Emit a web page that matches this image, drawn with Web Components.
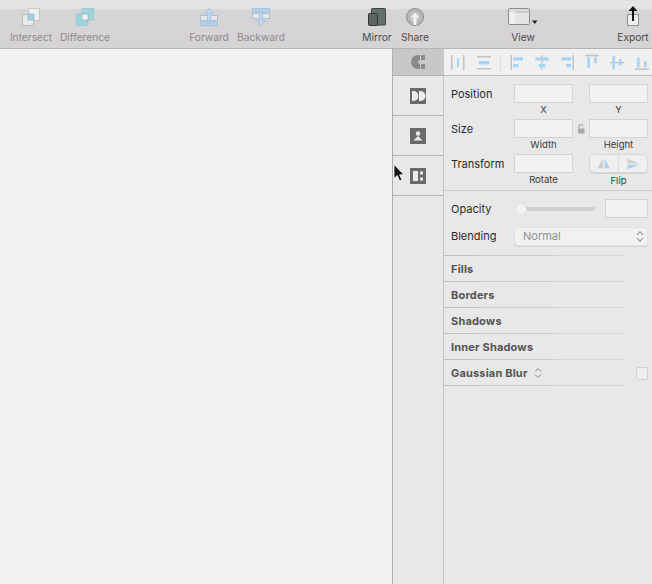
<!DOCTYPE html>
<html><head><meta charset="utf-8">
<style>
html,body{margin:0;padding:0;background:#f2f2f2;}
body{width:652px;height:584px;overflow:hidden;font-family:"Inter","Liberation Sans",sans-serif;}
app-shell{display:block;}
</style></head>
<body>
<app-shell>
  <tool-bar>
    <tool-item label="Intersect" w="52" ml="5" dim><svg width="18" height="18" viewBox="0 0 18 18"><rect x="6.500" y=".5" width="11" height="12" fill="#efefef" stroke="#c4c4c4"/><rect x=".5" y="6.500" width="11" height="11" fill="#e9e9e9" stroke="#bdbdbd"/><rect x="6" y="6" width="6" height="6" fill="#9ed4dc" stroke="#8ab" stroke-width=".6"/></svg></tool-item>
    <tool-item label="Difference" w="52" ml="2" dim><svg width="18" height="18" viewBox="0 0 18 18"><rect x="6" y="0" width="12" height="12" fill="#9ed4dc" stroke="#8cc0c9" stroke-width=".6"/><rect x="0" y="6" width="12" height="12" fill="#9ed4dc" stroke="#8cc0c9" stroke-width=".6"/><rect x="6" y="6" width="6" height="6" fill="#eee" stroke="#8aa" stroke-width=".5"/></svg></tool-item>
    <tool-item label="Forward" w="52" ml="72" dim><svg width="18" height="18" viewBox="0 0 18 18"><rect x=".5" y="14" width="17" height="3.500" fill="#b4d2ec" stroke="#98bddc" stroke-width=".7"/><rect x=".5" y="7.500" width="17" height="5" fill="#e6e6e6" stroke="#a3bdd4" stroke-width=".9"/><path d="M9 .5l4.500 5h-3V14h-3V5.500h-3z" fill="#bcd7ee" stroke="#98bddc" stroke-width=".7"/></svg></tool-item>
    <tool-item label="Backward" w="52" dim><svg width="18" height="18" viewBox="0 0 18 18"><rect x=".5" y=".5" width="17" height="3.500" fill="#b4d2ec" stroke="#98bddc" stroke-width=".7"/><rect x=".5" y="5.500" width="17" height="5" fill="#e6e6e6" stroke="#a3bdd4" stroke-width=".9"/><path d="M7.500 4h3v8.500h3L9 17.500 4.500 12.500h3z" fill="#bcd7ee" stroke="#98bddc" stroke-width=".7"/></svg></tool-item>
    <tool-item label="Mirror" w="38" ml="71"><svg width="18" height="18" viewBox="0 0 18 18"><rect x="3" y="0" width="15" height="17.500" rx="1.500" fill="#3f4442"/><rect x="4" y="1" width="13" height="15.500" fill="#66706b"/><rect x=".5" y="5.500" width="9" height="12" rx="1" fill="#5d6662" stroke="#333" stroke-width="1"/></svg></tool-item>
    <tool-item label="Share" w="38"><svg width="18" height="18" viewBox="0 0 18 18"><circle cx="9" cy="9" r="8.500" fill="#b5b5b5" stroke="#8f8f8f"/><circle cx="9" cy="9" r="5" fill="#c9c9c9"/><path d="M9 5l4 4.500h-2.500V17h-3V9.500H5z" fill="#f4f4f4"/></svg></tool-item>
    <tool-item label="View" w="52" ml="63"><svg width="30" height="18" viewBox="0 0 30 18"><rect x=".5" y=".5" width="21" height="16" rx="1.500" fill="#f0f0f0" stroke="#8b8b8b"/><rect x="1" y="1" width="20" height="3" fill="#dcdcdc"/><rect x="7" y="4" width="14" height="12" fill="#e4e4e4"/><path d="M7 4h14" stroke="#b8b8b8"/><path d="M24 12.500h5.500l-2.750 3.500z" fill="#222"/></svg></tool-item>
    <tool-item label="Export" w="38" ml="65"><svg width="18" height="21" viewBox="0 0 18 21" style="margin-top:-2px"><rect x="3.500" y="8.500" width="11" height="11" fill="#eee" stroke="#8f8f8f"/><path d="M9 15V3" stroke="#111" stroke-width="2"/><path d="M9 0l4.500 5h-9z" fill="#111"/></svg></tool-item>
  </tool-bar>
  <work-area>
    <side-rail>
      <rail-cell active h="26"><svg width="14" height="14" viewBox="0 0 14 14"><path d="M7 0A7 7 0 0 0 7 14H9V9.500L6.500 7 9 4.500V0z" fill="#8a8a8a"/><rect x="10" y="0" width="4" height="5" fill="#8a8a8a"/><rect x="10" y="9" width="4" height="5" fill="#8a8a8a"/></svg></rail-cell>
      <rail-cell h="39"><svg width="16" height="16" viewBox="0 0 16 16"><rect width="16" height="16" fill="#6a6a6a"/><path d="M2 3h1.500a5 5 0 0 1 0 10H2zM9 3h1.500a5 5 0 0 1 0 10H9z" fill="#ececec"/></svg></rail-cell>
      <rail-cell h="39"><svg width="16" height="16" viewBox="0 0 16 16"><rect width="16" height="16" fill="#6a6a6a"/><circle cx="8" cy="5.500" r="2.300" fill="#ececec"/><path d="M3.500 12.500L8 8l4.500 4.500z" fill="#ececec"/></svg></rail-cell>
      <rail-cell h="39"><svg width="16" height="16" viewBox="0 0 16 16"><rect width="16" height="16" fill="#6a6a6a"/><rect x="3" y="3" width="5" height="10" fill="#ececec"/><rect x="10" y="3.500" width="3" height="3" fill="#ececec"/><rect x="10" y="9.500" width="3" height="3" fill="#ececec"/></svg></rail-cell>
    </side-rail>
    <in-spector>
      <align-bar></align-bar>
      <geo-panel></geo-panel>
      <blend-panel></blend-panel>
      <fold-section label="Fills"></fold-section>
      <fold-section label="Borders"></fold-section>
      <fold-section label="Shadows"></fold-section>
      <fold-section label="Inner Shadows"></fold-section>
      <fold-section label="Gaussian Blur" stepper check></fold-section>
    </in-spector>
  </work-area>
  <mouse-cursor></mouse-cursor>
</app-shell>
<script>
function def(name, css, html, init){
  customElements.define(name, class extends HTMLElement{
    connectedCallback(){
      if(this.shadowRoot) return;
      const r=this.attachShadow({mode:"open"});
      r.innerHTML="<style>"+css+"</style>"+(typeof html==="function"?html(this):html);
      if(init) init(this,r);
    }
  });
}
const FONT='font-family:"Inter","Liberation Sans",sans-serif;';
const RULE='linear-gradient(90deg,#c2c2c2 0 34px,#cbcbcb 34px 109px,#d6d6d6 109px)';
def("tool-bar",`:host{display:flex;height:48px;border-bottom:1px solid #b4b4b4;background:linear-gradient(#dcdadc 0,#e6e4e6 1px,#e6e4e6 8px,#d7d4d7 10px,#d6d3d6 100%);overflow:hidden;box-sizing:content-box;${FONT}}`,`<slot></slot>`);
def("tool-item",`:host{display:flex;flex:none;flex-direction:column;align-items:center;padding-top:8px;box-sizing:border-box;height:48px;white-space:nowrap;}
.i{height:18px;display:flex;align-items:flex-start;justify-content:center;}
.l{margin-top:5px;font-size:10.200px;line-height:13px;letter-spacing:0;color:#4a4a4a;}
:host([dim]) .l{color:#8b8b8b;}`,
  h=>`<div class="i"><slot></slot></div><div class="l">${h.getAttribute("label")}</div>`,
  h=>{h.style.width=h.getAttribute("w")+"px";if(h.hasAttribute("ml"))h.style.marginLeft=h.getAttribute("ml")+"px";});
def("app-shell",`:host{display:block;position:relative;width:652px;height:584px;overflow:hidden;}`,`<slot></slot>`);
def("work-area",`:host{display:flex;justify-content:flex-end;height:535px;background:#f2f2f2;}`,`<slot></slot>`);
def("side-rail",`:host{display:block;flex:none;width:50px;background:#e8e8e8;border-left:1px solid #aeaeae;border-right:1px solid #c4c4c4;}`,`<slot></slot>`);
def("rail-cell",`:host{display:flex;align-items:center;justify-content:center;border-bottom:1px solid #b4b4b4;}
:host([active]){background:#c8c8c8;}`,`<slot></slot>`,h=>{h.style.height=h.getAttribute("h")+"px";});
def("in-spector",`:host{display:block;flex:none;width:208px;background:#e8e8e8;color:#2b2b2b;font-size:11px;${FONT}}`,`<slot></slot>`);
def("align-bar",`:host{display:block;height:26px;background:#f0f0f0;border-bottom:1px solid #bcbcbc;}svg{display:block;}`,(()=>{
  const g="#c2c2c2",b="#a9d3f6";
  const R=(x,y,w,h,c)=>`<rect x="${x-444}" y="${y-49}" width="${w}" height="${h}" fill="${c}"/>`;
  return `<svg width="208" height="26" viewBox="0 0 208 26">`+
  R(451,55,1.500,15,g)+R(463,55,1.500,15,g)+R(457,58,2,9,b)+
  R(477,56,14,1.500,g)+R(477,68,14,1.500,g)+R(479,61,10,3.500,b)+
  R(500,54,1,20,"#dedede")+
  R(510.500,55,1.500,15,g)+R(513,57.300,10,3.300,b)+R(513,64,5.500,3.300,b)+
  R(541.300,55,1.300,15,g)+R(535.300,57.300,13.400,3.300,b)+R(538.700,64,6.600,3.300,b)+
  R(572.500,55,1.500,15,g)+R(561.300,57.300,10,3.300,b)+R(566,64,5.300,3.300,b)+
  R(585,54.700,14,1.700,g)+R(587.300,57.300,2.700,10.700,b)+R(594,57.300,2.700,6,b)+
  R(610,62,14,1.300,g)+R(612.300,56,2.700,13.300,b)+R(619,59.300,2.700,6,b)+
  R(635,68.300,14,1.500,g)+R(637,57.300,2.700,10,b)+R(644,61.300,2.700,6,b)+
  `</svg>`;
})());
def("num-field",`:host{display:block;text-align:center;font-size:9.500px;line-height:12px;color:#3a3a3a;}
.b{height:19px;box-sizing:border-box;background:#f1f1f1;border:1px solid #d4d4d4;margin-bottom:1px;}`,
  h=>`<div class="b"></div><div>${h.getAttribute("cap")}</div>`);
def("geo-panel",`:host{display:grid;grid-template-columns:63px 59px 16px 59px;grid-template-rows:35px 35px 36px;padding:8px 0 0 7px;border-bottom:1px solid #cdcdcd;}
.lab{line-height:19px;font-size:11px;padding-top:1px;}
.lock{display:flex;justify-content:center;padding-top:5px;align-items:flex-start;}
.flip{display:flex;flex-direction:column;align-items:center;font-size:9.500px;line-height:12px;color:#3a3a3a;}
.btn{width:59px;height:19px;box-sizing:border-box;border:1px solid #d8d8d8;border-radius:5px;background:#efefef;display:flex;margin-bottom:2px;box-shadow:0 1px 0 #d0d0d0;}
.btn span{flex:1;display:flex;align-items:center;justify-content:center;}
.btn span+span{border-left:1px solid #dcdcdc;}`,
`<div class="lab">Position</div><num-field cap="X"></num-field><div></div><num-field cap="Y"></num-field>
<div class="lab">Size</div><num-field cap="Width"></num-field><div class="lock"><svg width="8" height="10" viewBox="0 0 8 10"><path d="M2 4.500V2.500a2 2 0 0 1 4 0" fill="none" stroke="#aaa" stroke-width="1.200"/><rect x="1" y="4.500" width="6.500" height="5" fill="#aaa"/></svg></div><num-field cap="Height"></num-field>
<div class="lab">Transform</div><num-field cap="Rotate"></num-field><div></div>
<div class="flip"><div class="btn"><span><svg width="14" height="11" viewBox="0 0 14 11"><path d="M6 .5V10.500H.5z" fill="#cfcfcf"/><path d="M7.500 .5V10.500H13z" fill="#a9d3f6"/></svg></span><span><svg width="13" height="12" viewBox="0 0 13 12"><path d="M.5 .5L12 5.500H.5z" fill="#cfcfcf"/><path d="M.5 6.700H12L.5 11.500z" fill="#a9d3f6"/></svg></span></div>Flip</div>`);
def("blend-panel",`:host{display:block;padding:8px 4px 9px 7px;}
.r{display:flex;align-items:center;height:19px;}
.r+.r{margin-top:9px;}
.lab{width:63px;flex:none;font-size:11px;}
.r+.r .lab{padding-bottom:2px;}
.track{width:79px;margin-left:2px;height:4px;border-radius:2px;background:#cfcfcf;position:relative;flex:none;}
.knob{position:absolute;left:-1px;top:-4px;width:12px;height:12px;border-radius:50%;background:#f3f3f3;border:1px solid #dedede;box-sizing:border-box;}
.box{width:43px;height:19px;box-sizing:border-box;background:#f1f1f1;border:1px solid #d4d4d4;margin-left:10px;flex:none;}
.sel{width:134px;height:19px;box-sizing:border-box;border-radius:4px;background:#f1f1f1;box-shadow:0 1px 0 #d2d2d2;border:1px solid #e2e2e2;display:flex;align-items:center;justify-content:space-between;padding:0 3px 0 8px;color:#8f8f8f;font-size:11px;flex:none;}
.t{padding-bottom:2px;}`,
`<div class="r"><div class="lab">Opacity</div><div class="track"><div class="knob"></div></div><div class="box"></div></div>
<div class="r"><div class="lab">Blending</div><div class="sel"><span class="t">Normal</span><svg width="8" height="13" viewBox="0 0 8 13"><path d="M1 5l3-3.500L7 5M1 8l3 3.500L7 8" fill="none" stroke="#777" stroke-width="1"/></svg></div></div>`);
def("fold-section",`:host{display:block;position:relative;box-sizing:border-box;height:26px;}
.l{display:flex;align-items:center;height:25px;padding:0 0 0 7px;box-sizing:border-box;font-weight:700;font-size:11px;letter-spacing:.18px;color:#555;}
.l svg{margin-left:6px;}
.rule{height:1px;width:180px;background:${RULE};}
.c{position:absolute;right:4px;top:7px;width:12px;height:13px;box-sizing:border-box;border:1px solid #d2d2d2;border-radius:2px;background:#efefef;}`,
 h=>`<div class="l">${h.getAttribute("label")}${h.hasAttribute("stepper")?'<svg width="8" height="12" viewBox="0 0 8 12"><path d="M1 4.500l3-3 3 3M1 7.500l3 3 3-3" fill="none" stroke="#888" stroke-width="1"/></svg>':''}</div><div class="rule"></div>${h.hasAttribute("check")?'<div class="c"></div>':''}`,
 h=>{ if(h.previousElementSibling && h.previousElementSibling.tagName==="BLEND-PANEL"){ const d=document.createElement("div"); d.style.cssText="height:1px;width:180px;background:"+RULE; h.parentNode.insertBefore(d,h);} });
def("mouse-cursor",`:host{position:absolute;left:393px;top:164px;width:12px;height:18px;}svg{display:block;}`,
 `<svg width="12" height="18" viewBox="0 0 12 18"><path d="M1 .5V14.500L4.300 11.500L6.600 17L9 16L6.700 10.800H11z" fill="#111" stroke="#fff" stroke-width=".8"/></svg>`);
</script>
</body></html>
